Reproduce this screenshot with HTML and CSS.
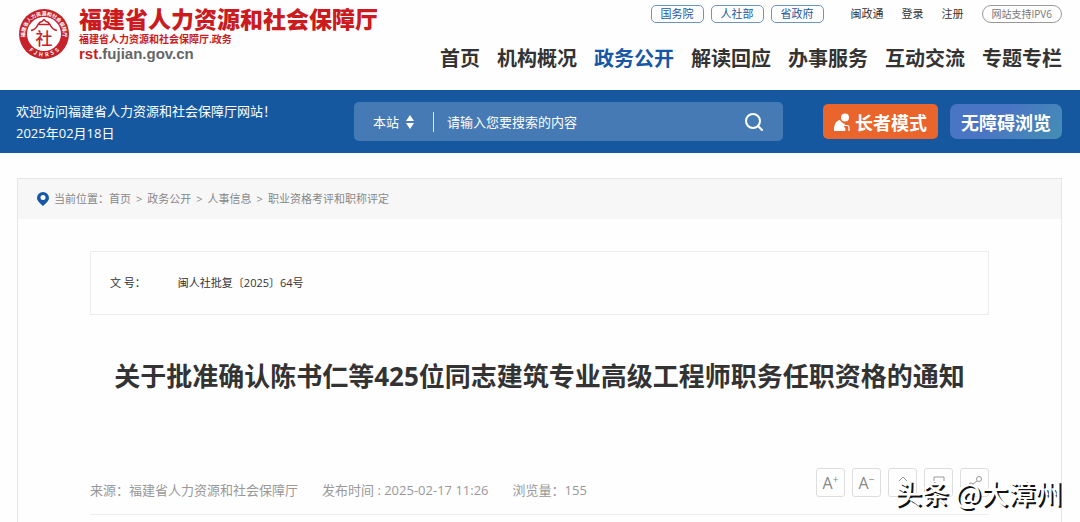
FILE: index.html
```html
<!DOCTYPE html>
<html lang="zh-CN">
<head>
    <meta charset="UTF-8">
    <meta name="viewport" content="width=device-width, initial-scale=1.0">
    <title>福建省人力资源和社会保障厅</title>
    <link rel="stylesheet" href="styles.css">
</head>
<body>
    <header class="header">
        <a class="logo" href="#">
            <svg class="logo-seal" viewBox="0 0 100 100" aria-hidden="true">
                <defs>
                    <path id="ring-top" d="M14.6 64.6A38 38 0 1 1 85.4 64.6"/>
                    <path id="ring-bottom" d="M5 50A45 45 0 0 0 95 50"/>
                </defs>
                <circle cx="50" cy="50" r="50" fill="#c5222b"/>
                <circle cx="50" cy="50" r="34" fill="#fff"/>
                <text class="seal-ring"><textPath href="#ring-top" startOffset="50%">福建省人力资源和社会保障厅</textPath></text>
                <text class="seal-latin"><textPath href="#ring-bottom" startOffset="50%">F&#160; J&#160; H&#160; R&#160; S&#160; S</textPath></text>
                <path d="M24 43q10-2 14-12h24q4 10 14 12M38 31q4-6 8-6l4-4 4 4q4 0 8 6" fill="none" stroke="#c5222b" stroke-width="3"/>
                <text class="seal-char" x="50" y="72">社</text>
            </svg>
            <span class="logo-text">
                <strong class="logo-name">福建省人力资源和社会保障厅</strong>
                <span class="logo-sub">福建省人力资源和社会保障厅.政务</span>
                <span class="logo-url"><em>rst</em>.fujian.gov.cn</span>
            </span>
        </a>
        <div class="header-right">
            <div class="top-links">
                <div class="top-group">
                    <a class="pill" href="#">国务院</a>
                    <a class="pill" href="#">人社部</a>
                    <a class="pill" href="#">省政府</a>
                </div>
                <div class="top-group user-links">
                    <a href="#">闽政通</a>
                    <a href="#">登录</a>
                    <a href="#">注册</a>
                    <span class="pill pill-grey">网站支持IPV6</span>
                </div>
            </div>
            <nav class="main-nav">
                <a href="#">首页</a>
                <a href="#">机构概况</a>
                <a href="#" class="active">政务公开</a>
                <a href="#">解读回应</a>
                <a href="#">办事服务</a>
                <a href="#">互动交流</a>
                <a href="#">专题专栏</a>
            </nav>
        </div>
    </header>

    <div class="banner">
        <div class="welcome">
            <p>欢迎访问福建省人力资源和社会保障厅网站！</p>
            <p>2025年02月18日</p>
        </div>
        <form class="search" role="search">
            <div class="scope">
                <select aria-label="搜索范围">
                    <option>本站</option>
                </select>
                <svg viewBox="0 0 8 14" aria-hidden="true"><path d="M4 0l4 6H0zM4 14l4-6H0z" fill="#fff"/></svg>
            </div>
            <input type="text" placeholder="请输入您要搜索的内容" aria-label="搜索内容">
            <button type="submit" aria-label="搜索">
                <svg viewBox="0 0 18 18" fill="none" stroke="#fff" stroke-width="2" stroke-linecap="round" aria-hidden="true"><circle cx="8" cy="8" r="7"/><path d="M13 13l4 4"/></svg>
            </button>
        </form>
        <div class="modes">
            <button class="mode mode-elder" type="button">
                <svg viewBox="0 0 16 18" aria-hidden="true"><circle cx="11" cy="4.5" r="4" fill="#fff"/><path d="M0 18c0-5 1-10 6-11 1 2 3 3.500 5 4l-1 3c1.500 1 2 2 1 4z" fill="#fff"/><path d="M10 12.500h3q2 0 2 2V18" fill="none" stroke="#fff" stroke-width="1.200"/></svg>
                长者模式
            </button>
            <button class="mode mode-access" type="button">无障碍浏览</button>
        </div>
    </div>

    <main class="page">
        <nav class="crumbs" aria-label="当前位置">
            <svg viewBox="0 0 12 14" aria-hidden="true"><path d="M6 0a6 6 0 0 1 6 6c0 3-3 5-6 8C3 11 0 9 0 6a6 6 0 0 1 6-6z" fill="#1658a5"/><circle cx="6" cy="5.5" r="2.5" fill="#fff"/></svg>
            <span>当前位置：<a href="#">首页</a></span>
            <span>&gt;</span>
            <a href="#">政务公开</a>
            <span>&gt;</span>
            <a href="#">人事信息</a>
            <span>&gt;</span>
            <a href="#">职业资格考评和职称评定</a>
        </nav>

        <article class="article">
            <dl class="doc-info">
                <dt>文 号：</dt>
                <dd>闽人社批复〔2025〕64号</dd>
            </dl>
            <h1>关于批准确认陈书仁等425位同志建筑专业高级工程师职务任职资格的通知</h1>
            <div class="meta">
                <div class="meta-text">
                    <span>来源：福建省人力资源和社会保障厅</span>
                    <span>发布时间 : 2025-02-17 11:26</span>
                    <span>浏览量：155</span>
                </div>
                <div class="tools">
                    <button type="button" aria-label="放大字体">A<sup>+</sup></button>
                    <button type="button" aria-label="缩小字体">A<sup>−</sup></button>
                    <button type="button" aria-label="收藏">
                        <svg viewBox="0 0 16 16" aria-hidden="true"><path d="M4 6l4-4 4 4"/></svg>
                    </button>
                    <button type="button" aria-label="打印">
                        <svg viewBox="0 0 16 16" aria-hidden="true"><path d="M3 6V2h10v4"/></svg>
                    </button>
                    <button type="button" aria-label="分享">
                        <svg viewBox="0 0 16 16" aria-hidden="true"><circle cx="12" cy="4" r="2.500"/><circle cx="4" cy="10" r="2"/><path d="M6 9l4-3"/></svg>
                    </button>
                </div>
            </div>
        </article>
    </main>

    <div class="watermark">头条 @大漳州</div>
</body>
</html>
```
FILE: styles.css
```css
:root {
    --blue: #1658a0;
    --link-blue: #1658a5;
    --red: #cb1b1e;
    --text: #333333;
    --muted: #999999;
    --line: #e6e6e6;
}
* {
    box-sizing: border-box;
}
body {
    position: relative;
    min-height: 100vh;
    margin: 0;
    font-family: "Open Sans", "Noto Sans CJK SC", sans-serif;
    font-size: 11px;
    line-height: 18px;
    color: var(--text);
    background-color: #fefefe;
    display: flex;
    flex-direction: column;
    overflow-x: hidden;
}
a {
    color: inherit;
    text-decoration: none;
}
p, h1, dl, dd {
    margin: 0;
}
button, input, select {
    font-family: inherit;
    color: inherit;
    border: none;
    background: none;
    padding: 0;
    outline: none;
}
button {
    cursor: pointer;
}

/* Header */
.header {
    display: flex;
    justify-content: space-between;
    align-items: flex-start;
    min-height: 90px;
    padding: 5px 18px 0 19px;
}
.logo {
    display: flex;
    gap: 10px;
    white-space: nowrap;
}
.logo-seal {
    width: 50px;
    height: 50px;
    margin-top: 4px;
}
.seal-ring, .seal-latin, .seal-char {
    font-family: "Noto Sans CJK SC", sans-serif;
    font-weight: 700;
    text-anchor: middle;
}
.seal-ring {
    font-size: 10px;
    fill: #ffffff;
}
.seal-latin {
    font-size: 11px;
    fill: #ffffff;
}
.seal-char {
    font-size: 34px;
    font-weight: 500;
    fill: #c5222b;
}
.logo-text {
    display: flex;
    flex-direction: column;
    color: var(--red);
}
.logo-name {
    font-family: "Noto Sans CJK SC", sans-serif;
    font-size: 23px;
    font-weight: 900;
    line-height: 27px;
}
.logo-sub {
    font-size: 10px;
    font-weight: 700;
    line-height: 14px;
}
.logo-url {
    font-family: "Liberation Sans", sans-serif;
    font-size: 15px;
    font-weight: 700;
    line-height: 16px;
    color: #666666;
}
.logo-url em {
    font-style: normal;
    color: var(--red);
}
.top-links, .top-group {
    display: flex;
    align-items: center;
}
.top-links {
    justify-content: flex-end;
    gap: 27px;
}
.top-group {
    gap: 7px;
}
.user-links {
    gap: 18px;
}
.pill {
    padding: 0 9px;
    line-height: 16px;
    color: var(--link-blue);
    border: 1px solid #6f94c4;
    border-radius: 5px;
}
.pill-grey {
    font-size: 10px;
    color: #777777;
    border-color: #999999;
    border-radius: 9px;
}
.main-nav {
    display: flex;
    justify-content: flex-end;
    gap: 17px;
    margin-top: 22px;
    font-size: 20px;
    font-weight: 700;
    line-height: 28px;
    white-space: nowrap;
}
.main-nav .active {
    color: var(--link-blue);
}

/* Blue banner */
.banner {
    display: flex;
    align-items: center;
    min-height: 63px;
    padding: 0 18px 0 16px;
    font-size: 13px;
    color: #ffffff;
    background-color: var(--blue);
}
.welcome {
    flex: 0 0 338px;
    line-height: 22px;
}
.search {
    flex: 1;
    display: flex;
    align-items: center;
    height: 39px;
    padding: 0 20px 0 19px;
    border-radius: 5px;
    background-color: #467ab4;
}
.scope {
    display: flex;
    align-items: center;
    gap: 6px;
    height: 20px;
    padding-right: 19px;
    border-right: 1px solid #dce8f5;
}
.scope select {
    appearance: none;
    font-size: 13px;
}
.scope svg {
    width: 8px;
    height: 14px;
}
.search input {
    flex: 1;
    min-width: 0;
    padding-left: 13px;
    font-size: 13px;
}
.search input::placeholder {
    color: #ffffff;
    opacity: 1;
}
.search button, .search button svg {
    display: block;
    width: 18px;
    height: 18px;
}
.modes {
    display: flex;
    gap: 12px;
    margin-left: 40px;
}
.mode {
    display: flex;
    align-items: center;
    gap: 5px;
    height: 35px;
    padding: 0 11px;
    font-size: 18px;
    font-weight: 700;
    white-space: nowrap;
    border-radius: 5px;
}
.mode svg {
    width: 16px;
    height: 18px;
}
.mode-elder {
    background-color: #e9652b;
}
.mode-access {
    border-radius: 7px;
    background: linear-gradient(135deg, #4a74c4 40%, #438fb4);
}

/* Content */
.page {
    flex: 1;
    margin: 25px 18px 0 17px;
    border: 1px solid var(--line);
    border-bottom: none;
}
.crumbs {
    display: flex;
    align-items: center;
    gap: 5px;
    min-height: 40px;
    padding: 0 19px;
    color: #888888;
    background-color: #f7f7f7;
}
.crumbs svg {
    width: 12px;
    height: 14px;
}
.article {
    padding: 32px 72px 0;
}
.doc-info {
    display: flex;
    gap: 32px;
    padding: 22px 19px;
    border: 1px solid #ececec;
}
.article h1 {
    margin-top: 41px;
    font-size: 26px;
    line-height: 40px;
    text-align: center;
    white-space: nowrap;
}
.meta {
    display: flex;
    justify-content: space-between;
    margin-top: 72px;
    padding-bottom: 15px;
    border-bottom: 1px solid #eeeeee;
}
.meta-text {
    display: flex;
    gap: 24px;
    padding-top: 13px;
    font-size: 13px;
    color: var(--muted);
}
.tools {
    display: flex;
    gap: 7px;
}
.tools button {
    width: 29px;
    height: 29px;
    font-size: 16px;
    line-height: 26px;
    color: #888888;
    border: 1px solid #dddddd;
    border-radius: 3px;
}
.tools sup {
    font-size: 10px;
    line-height: 0;
}
.tools svg {
    display: block;
    width: 16px;
    height: 16px;
    margin: 0 auto;
    fill: none;
    stroke: #999999;
}
.watermark {
    position: absolute;
    right: 18px;
    bottom: 11px;
    font-family: "Noto Sans CJK SC", sans-serif;
    font-size: 27px;
    font-weight: 500;
    line-height: 36px;
    color: #ffffff;
    text-shadow: 2px 2px 0 #111111;
    white-space: nowrap;
}
```
